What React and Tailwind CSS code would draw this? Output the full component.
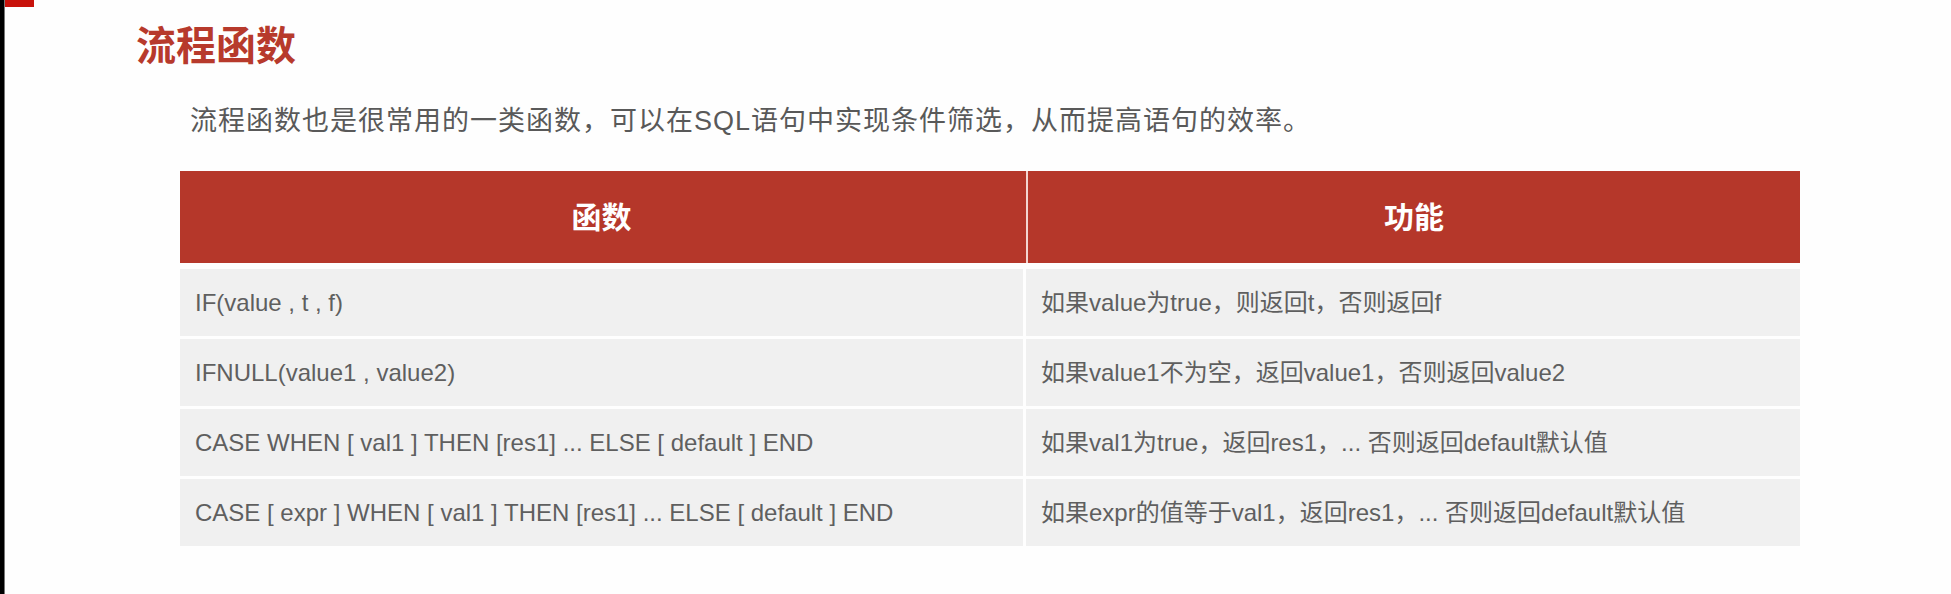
import React from 'react';

const rows = [
  ['IF(value , t , f)', '如果value为true，则返回t，否则返回f'],
  ['IFNULL(value1 , value2)', '如果value1不为空，返回value1，否则返回value2'],
  ['CASE WHEN [ val1 ] THEN [res1] ... ELSE [ default ] END', '如果val1为true，返回res1，... 否则返回default默认值'],
  ['CASE [ expr ] WHEN [ val1 ] THEN [res1] ... ELSE [ default ] END', '如果expr的值等于val1，返回res1，... 否则返回default默认值'],
];

const font = { fontFamily: '"Liberation Sans", "Noto Sans CJK SC", sans-serif' };

export default function App() {
  return (
    <div className="relative flex h-[594px] w-full bg-[#fefefe]" style={font}>
      {/* left window edge */}
      <div className="h-full w-[5px] border-r border-[#777] bg-black" />
      <div className="absolute left-[5px] top-0 h-[7px] w-[29px] bg-[#c8120b]" />

      <div className="flex-1 pt-[19px]">
        <h1
          className="ml-[131px] text-[40px] font-bold leading-[48px] text-[#b73a2c]"
          style={{ fontFamily: '"Noto Sans CJK SC", sans-serif' }}
        >
          流程函数
        </h1>

        <p className="ml-[185px] mt-[36px] text-[27px] leading-[36px] tracking-[1px] text-[#595959]">
          流程函数也是很常用的一类函数，可以在SQL语句中实现条件筛选，从而提高语句的效率。
        </p>

        {/* function table */}
        <div className="ml-[175px] mt-[32px] w-[1620px]">
          <div className="grid grid-cols-[843px_774px] gap-x-[3px] bg-[#b5372a]">
            <div className="flex h-[92px] items-center justify-center bg-[#b5372a] text-[30px] font-bold text-white">
              函数
            </div>
            <div className="flex h-[92px] items-center justify-center border-l-2 border-[#f3d5d0] bg-[#b5372a] text-[30px] font-bold text-white">
              功能
            </div>
          </div>

          <div className="mt-[6px] flex flex-col gap-y-[3px]">
            {rows.map(([fn, desc]) => (
              <div key={fn} className="grid grid-cols-[843px_774px] gap-x-[3px]">
                <div className="flex h-[67px] items-center bg-[#f0f0f0] pl-[15px] text-[24px] text-[#5f5f5f]">
                  {fn}
                </div>
                <div className="flex h-[67px] items-center bg-[#f0f0f0] pl-[15px] text-[24px] text-[#5f5f5f]">
                  {desc}
                </div>
              </div>
            ))}
          </div>
        </div>
      </div>
    </div>
  );
}
